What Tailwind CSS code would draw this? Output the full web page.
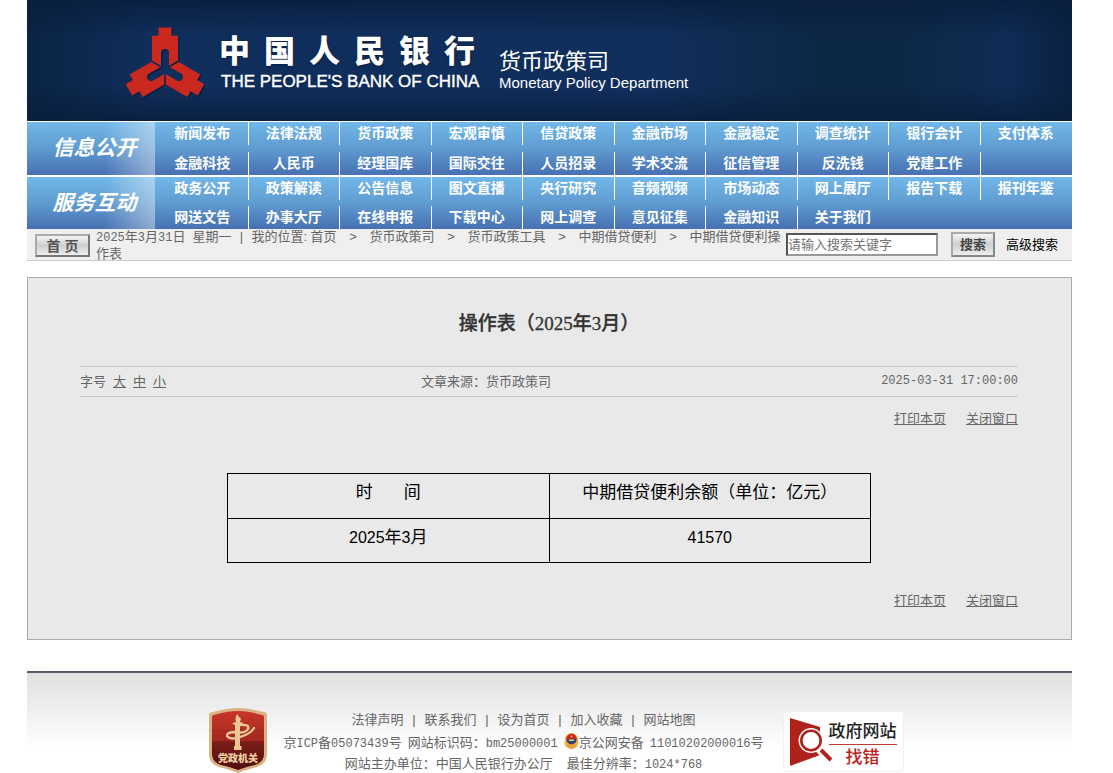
<!DOCTYPE html>
<html lang="zh-CN">
<head>
  <meta charset="UTF-8" />
  <meta name="viewport" content="width=device-width, initial-scale=1.0" />
  <title>操作表（2025年3月）</title>
  <script src="https://cdn.jsdelivr.net/npm/@tailwindcss/browser@4"></script>
</head>
<body class="bg-white pr-[14px] font-['Liberation_Sans','Noto_Sans_CJK_SC',sans-serif] text-[13px] leading-[15px] text-[#666]">
<div class="mx-auto max-w-[1045px]">

  <!-- banner -->
  <header class="flex h-[121px] items-start bg-[linear-gradient(to_bottom,#081d3bcc_0%,#0000_30%,#0000_72%,#081d3bcc_100%),linear-gradient(to_right,#0a2443_0%,#102e5b_12%,#112f5c_60%,#0d2846_75%,#0d2846_84%,#0f2c55_94%,#0a2140_100%)] pl-[95px] text-white">
    <svg class="mt-[24px] h-[74px] w-[84px] shrink-0" viewBox="-43 -45 84 74" aria-hidden="true">
      <defs>
        <path id="coin" d="M-13-33.3H-6.500V-41.6H6.500V-33.3H13V-8.4L4-3.2V-16A4 4 0 0 0-4-16V-3.2L-13-8.4Z" />
      </defs>
      <g fill="#061a38" opacity=".6" transform="translate(1.5 1.5)">
        <use href="#coin" /><use href="#coin" transform="rotate(120)" /><use href="#coin" transform="rotate(240)" />
      </g>
      <g fill="#cb2820">
        <use href="#coin" /><use href="#coin" transform="rotate(120)" /><use href="#coin" transform="rotate(240)" />
      </g>
    </svg>
    <div class="mt-[34px] ml-[13px] w-[256px]">
      <div class="flex justify-between text-[31px] leading-[36px] font-black text-shadow-md">
        <span>中</span><span>国</span><span>人</span><span>民</span><span>银</span><span>行</span>
      </div>
      <div class="mt-[2px] pl-[2px] text-[17px] leading-[20px] font-medium whitespace-nowrap text-shadow-md [-webkit-text-stroke:0.4px_white]">THE PEOPLE'S BANK OF CHINA</div>
    </div>
    <div class="mt-[50px] ml-[24px]">
      <div class="text-[22px] leading-[24px]">货币政策司</div>
      <div class="text-[15px] leading-[17px] whitespace-nowrap">Monetary Policy Department</div>
    </div>
  </header>

  <nav id="mainNav" class="mt-px flex flex-col gap-[2px]"></nav>

  <!-- breadcrumb + search -->
  <div class="flex h-[32px] items-start border-b border-[#ccc] bg-[#efefef] pl-[8px]">
    <button type="button" class="mt-[5px] h-[23px] w-[55px] shrink-0 border-2 border-[#777] border-t-[#aaa] border-l-[#aaa] bg-linear-to-b from-[#f4f4f4] via-[#cfcfcf] to-[#eee] text-[14px] leading-[18px] font-bold text-[#555]">首 页</button>
    <div class="ml-[6px] flex-1">
      <span class="font-['Liberation_Mono'] text-[12px]">2025</span>年<span class="font-['Liberation_Mono'] text-[12px]">3</span>月<span class="font-['Liberation_Mono'] text-[12px]">31</span>日<span class="ml-[7px]">星期一</span><span class="inline-block w-[20px] text-center">|</span>我的位置<span class="inline-block w-[7px]">:</span><a href="#">首页</a><span class="inline-block w-[33px] text-center">&gt;</span><a href="#">货币政策司</a><span class="inline-block w-[33px] text-center">&gt;</span><a href="#">货币政策工具</a><span class="inline-block w-[33px] text-center">&gt;</span><a href="#">中期借贷便利</a><span class="inline-block w-[33px] text-center">&gt;</span><a href="#">中期借贷便利操作表</a>
    </div>
    <form class="flex shrink-0 pr-[14px] text-black">
      <label for="kw" class="sr-only">搜索关键字</label>
      <input id="kw" type="text" placeholder="请输入搜索关键字" class="mt-[4px] h-[23px] w-[152px] border-2 border-[#999] border-t-[#555] border-l-[#555] bg-white text-[13px] leading-[19px] placeholder:text-[#757575]" />
      <button type="button" class="mt-[3px] ml-[13px] h-[25px] w-[44px] border-2 border-[#888] border-t-[#aaa] border-l-[#aaa] bg-linear-to-b from-[#f4f4f4] via-[#cfcfcf] to-[#eee] text-[13px] font-bold text-[#444]">搜索</button>
      <a href="#" class="mt-[8px] ml-[11px]">高级搜索</a>
    </form>
  </div>

  <!-- article -->
  <main class="mt-[16px] border border-[#a9abb2] bg-[#e9e9e9] pr-[53px] pb-[31px] pl-[52px]">
    <h1 class="pt-[34px] text-center font-['Liberation_Serif','Noto_Sans_CJK_SC',serif] text-[19px] leading-[24px] font-medium text-[#333] [-webkit-text-stroke:0.3px_#333]">操作表（2025年3月）</h1>
    <div class="mt-[30px] grid grid-cols-[341px_1fr_auto] border-y border-[#c8c8c8] py-[7px]">
      <div class="flex gap-[7px]">字号 <a href="#" class="underline">大</a><a href="#" class="underline">中</a><a href="#" class="underline">小</a></div>
      <div>文章来源：货币政策司</div>
      <div class="font-['Liberation_Mono'] text-[12px]">2025-03-31 17:00:00</div>
    </div>
    <div class="mt-[14px] flex justify-end gap-[20px]"><a href="#" class="underline">打印本页</a><a href="#" class="underline">关闭窗口</a></div>
    <table class="mx-auto mt-[47px] w-[644px] max-w-full table-fixed border-collapse text-center text-[17px] leading-[26px] text-black">
      <tr>
        <th scope="col" class="border border-black px-2 pt-[6px] pb-[12px] font-normal">时<span class="inline-block w-[31px]"></span>间</th>
        <th scope="col" class="border border-black px-2 pt-[6px] pb-[12px] font-normal">中期借贷便利余额（单位：亿元）</th>
      </tr>
      <tr>
        <td class="border border-black px-2 pt-[6px] pb-[11px]"><span class="text-[16px]">2025</span>年<span class="text-[16px]">3</span>月</td>
        <td class="border border-black px-2 pt-[6px] pb-[11px] text-[16px]">41570</td>
      </tr>
    </table>
    <div class="mt-[30px] flex justify-end gap-[20px]"><a href="#" class="underline">打印本页</a><a href="#" class="underline">关闭窗口</a></div>
  </main>

  <!-- footer -->
  <footer class="mt-[31px] flex items-start justify-center border-t-2 border-[#55606c] bg-linear-to-b from-[#e0e0e0] to-white to-75% pl-[14px]">
    <svg class="mt-[35px] h-[65px] w-[58px] shrink-0" viewBox="0 0 58 65" role="img" aria-label="党政机关">
      <defs>
        <linearGradient id="shield" x2="0" y2="1">
          <stop offset="0" stop-color="#c8352a" /><stop offset=".5" stop-color="#a42820" /><stop offset=".51" stop-color="#7d1d18" /><stop offset="1" stop-color="#4e0f0d" />
        </linearGradient>
      </defs>
      <path d="M0 7Q0 4 4 4Q18 0 29 0Q40 0 54 4Q58 4 58 7V46Q58 56 48 59Q36 62 29 65Q22 62 10 59Q0 56 0 46Z" fill="#d9b384" />
      <path d="M3 9Q3 7 5 7Q18 3 29 3Q40 3 53 7Q55 7 55 9V46Q55 54 46 57Q36 59 29 62Q22 59 12 57Q3 54 3 46Z" fill="url(#shield)" />
      <path d="M3 23H55M3 28H55" stroke="#8d221b" stroke-width=".7" opacity=".6" />
      <g fill="#ecc796">
        <path d="M26.500 11L27 8L28.500 6L30 9L32 10.500L31 14L34.500 15L31 18V38H26V17L23 15.500L27 14Z" />
        <path d="M25 38H32.500V42H25Z" />
      </g>
      <path d="M31 17Q41 16 39 21Q36 26 26 24Q18 24 18 28Q22 33 34 28Q42 25 45 20" fill="none" stroke="#ecc796" stroke-width="2.4" stroke-linecap="round" />
      <text x="29" y="54" text-anchor="middle" font-family="Noto Sans CJK SC, sans-serif" font-size="10" font-weight="900" fill="#f0cfa5">党政机关</text>
    </svg>
    <div class="mt-[39px] ml-[16px] text-center">
      <div class="flex justify-center">
        <a href="#">法律声明</a><span class="w-[21px]">|</span><a href="#">联系我们</a><span class="w-[21px]">|</span><a href="#">设为首页</a><span class="w-[21px]">|</span><a href="#">加入收藏</a><span class="w-[21px]">|</span><a href="#">网站地图</a>
      </div>
      <div class="mt-[6px] flex items-center justify-center">
        <a href="#">京<span class="font-['Liberation_Mono'] text-[12px]">ICP</span>备<span class="font-['Liberation_Mono'] text-[12px]">05073439</span>号</a>
        <span class="ml-[6px]">网站标识码：<span class="font-['Liberation_Mono'] text-[12px]">bm25000001</span></span>
        <svg class="mb-[4px] ml-[6px] h-[17px] w-[15px]" viewBox="0 0 15 17" aria-hidden="true">
          <path d="M1 8Q-1 12 4 15L7.500 16.500L11 15Q16 12 14 8Z" fill="#f3b64b" />
          <circle cx="7.500" cy="6.500" r="6.500" fill="#e9a83b" />
          <circle cx="7.500" cy="6" r="5.200" fill="#c42a21" />
          <path d="M3 6H12V9L7.500 11.500L3 9Z" fill="#2b4385" />
          <path d="M7.500 2L8.500 4.200H6.500ZM4.500 6.500H10.500L9.500 8H5.500Z" fill="#f5cf62" />
          <path d="M3 12.500L7.500 14.500L12 12.500" fill="none" stroke="#d58b2d" />
        </svg>
        <a href="#">京公网安备<span class="ml-[6px] font-['Liberation_Mono'] text-[12px]">11010202000016</span>号</a>
      </div>
      <div class="mt-[2px]">网站主办单位：中国人民银行办公厅<span class="ml-[14px]">最佳分辨率：</span><span class="font-['Liberation_Mono'] text-[12px]">1024*768</span></div>
    </div>
    <a href="#" class="mt-[38px] ml-[19px] flex h-[61px] w-[121px] shrink-0 rounded-sm border border-[#f0f0f0] bg-white pt-[5px] pl-[6px]">
      <svg class="h-[50px] w-[42px] shrink-0" viewBox="0 0 42 50" aria-hidden="true">
        <path d="M0 1L30 10V38L0 49Z" fill="#b0211b" />
        <path d="M28 31L42 45" stroke="#fff" stroke-width="8" />
        <circle cx="21" cy="23.500" r="12.500" fill="#fff" />
        <circle cx="21" cy="23.500" r="9.700" fill="#fff" stroke="#b0211b" stroke-width="2.600" />
        <path d="M31 33L41 43" stroke="#b0211b" stroke-width="4" />
      </svg>
      <span class="-ml-[3px] text-center text-[17px] leading-[20px] font-medium">
        <span class="block border-b border-[#c43a33] pt-[5px] pb-[2px] text-[#222]">政府网站</span>
        <span class="block pt-[3px] text-[#b8231d]">找错</span>
      </span>
    </a>
  </footer>
</div>

<script>
const menus = [
  {
    judul: "信息公开",
    jarak: "gap-[7px]",
    baris: [
      ["新闻发布", "法律法规", "货币政策", "宏观审慎", "信贷政策", "金融市场", "金融稳定", "调查统计", "银行会计", "支付体系"],
      ["金融科技", "人民币", "经理国库", "国际交往", "人员招录", "学术交流", "征信管理", "反洗钱", "党建工作"]
    ]
  },
  {
    judul: "服务互动",
    jarak: "gap-[6px]",
    baris: [
      ["政务公开", "政策解读", "公告信息", "图文直播", "央行研究", "音频视频", "市场动态", "网上展厅", "报告下载", "报刊年鉴"],
      ["网送文告", "办事大厅", "在线申报", "下载中心", "网上调查", "意见征集", "金融知识", "关于我们"]
    ]
  }
];

// a divider follows every item except the last column and 关于我们
function garis(teks, i) {
  return i === 9 || teks === "关于我们" ? "border-transparent" : "border-white";
}

document.getElementById("mainNav").innerHTML = menus.map(menu => `
  <div class="flex bg-linear-to-b from-[#72b8ea] via-[#5f9bd0] to-[#4870b2] text-white">
    <h2 class="flex w-[128px] shrink-0 items-center justify-center bg-linear-to-r from-transparent from-60% to-white/40 pl-[7px] font-['Liberation_Serif','Noto_Sans_CJK_SC',serif] text-[21px] font-bold italic">${menu.judul}</h2>
    <div class="flex flex-1 flex-col ${menu.jarak} pl-[2px]">
      ${menu.baris.map(baris => `
        <ul class="grid grid-cols-10">
          ${baris.map((teks, i) => `
            <li class="h-[23px] border-r ${garis(teks, i)} text-center text-[14px] leading-[22px] font-bold"><a href="#">${teks}</a></li>`).join("")}
        </ul>`).join("")}
    </div>
  </div>`).join("");
</script>
</body>
</html>
